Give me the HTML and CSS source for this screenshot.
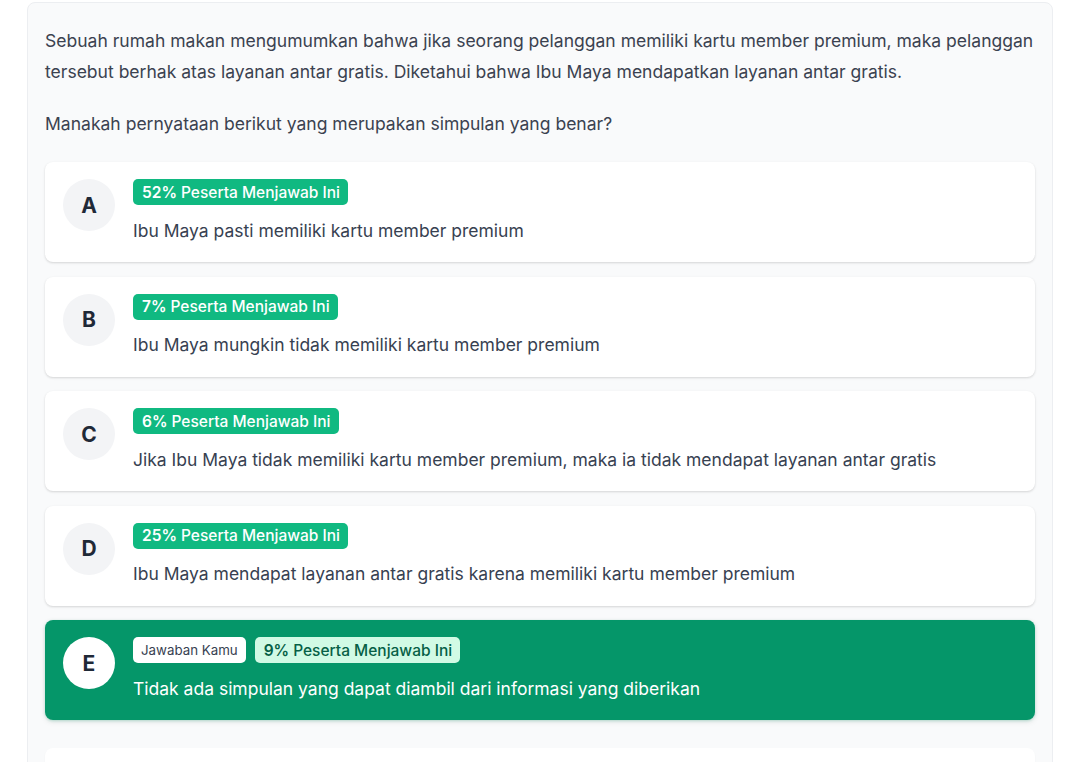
FILE: index.html
```html
<!DOCTYPE html>
<html lang="id">
<head>
<meta charset="utf-8">
<title>Soal</title>
<link rel="stylesheet" href="styles.css">
</head>
<body>
<div class="panel">
  <p class="question">Sebuah rumah makan mengumumkan bahwa jika seorang pelanggan memiliki kartu member premium, maka pelanggan tersebut berhak atas layanan antar gratis. Diketahui bahwa Ibu Maya mendapatkan layanan antar gratis.</p>
  <p class="question ask">Manakah pernyataan berikut yang merupakan simpulan yang benar?</p>

  <div class="options">
    <div class="option">
      <div class="letter">A</div>
      <div class="body">
        <div class="badges"><span class="badge"><b>52%</b> Peserta Menjawab Ini</span></div>
        <div class="text">Ibu Maya pasti memiliki kartu member premium</div>
      </div>
    </div>
    <div class="option">
      <div class="letter">B</div>
      <div class="body">
        <div class="badges"><span class="badge"><b>7%</b> Peserta Menjawab Ini</span></div>
        <div class="text">Ibu Maya mungkin tidak memiliki kartu member premium</div>
      </div>
    </div>
    <div class="option">
      <div class="letter">C</div>
      <div class="body">
        <div class="badges"><span class="badge"><b>6%</b> Peserta Menjawab Ini</span></div>
        <div class="text">Jika Ibu Maya tidak memiliki kartu member premium, maka ia tidak mendapat layanan antar gratis</div>
      </div>
    </div>
    <div class="option">
      <div class="letter">D</div>
      <div class="body">
        <div class="badges"><span class="badge"><b>25%</b> Peserta Menjawab Ini</span></div>
        <div class="text">Ibu Maya mendapat layanan antar gratis karena memiliki kartu member premium</div>
      </div>
    </div>
    <div class="option selected">
      <div class="letter">E</div>
      <div class="body">
        <div class="badges"><span class="tag">Jawaban Kamu</span><span class="badge"><b>9%</b> Peserta Menjawab Ini</span></div>
        <div class="text">Tidak ada simpulan yang dapat diambil dari informasi yang diberikan</div>
      </div>
    </div>
  </div>

  <div class="explain"></div>
</div>
</body>
</html>
```

FILE: styles.css
```css
html, body {
  margin: 0;
  padding: 0;
  background: #ffffff;
}
body {
  font-family: Inter, "Noto Sans", "Liberation Sans", sans-serif;
  color: #374151;
  overflow: hidden;
  height: 762px;
}
.panel {
  margin: 2px 27px 0 27px;
  background: #f9fafb;
  border: 1px solid #eceef1;
  border-radius: 8px;
  padding: 22px 17px 40px 17px;
}
.question {
  margin: 0;
  font-size: 17.55px;
  line-height: 31px;
  color: #3b4250;
}
.ask {
  margin-top: 21px;
}
.options {
  margin-top: 23px;
  display: flex;
  flex-direction: column;
  gap: 14.5px;
}
.option {
  display: flex;
  align-items: flex-start;
  background: #ffffff;
  border-radius: 8px;
  box-shadow: 0 1px 3px rgba(0,0,0,0.10), 0 1px 2px rgba(0,0,0,0.06);
  padding: 17px 18px 0 18px;
  height: 100px;
  box-sizing: border-box;
}
.letter {
  width: 52px;
  height: 52px;
  border-radius: 50%;
  background: #f3f4f6;
  color: #1f2937;
  font-weight: 700;
  font-size: 21px;
  display: flex;
  align-items: center;
  justify-content: center;
  flex-shrink: 0;
  margin-right: 18px;
}
.body {
  display: flex;
  flex-direction: column;
  gap: 11.5px;
}
.badges {
  display: flex;
  gap: 9px;
}
.badge {
  display: inline-flex;
  align-items: center;
  height: 26px;
  padding: 0 8px 0 9px;
  border-radius: 5px;
  background: #10b981;
  color: #ffffff;
  font-size: 15.5px;
  font-weight: 500;
  white-space: nowrap;
}
.badge b {
  font-weight: 600;
  margin-right: 4px;
}
.text {
  font-size: 17.5px;
  line-height: 27px;
  color: #374151;
}
.selected {
  background: #059669;
  box-shadow: 0 1px 3px rgba(5,150,105,0.25), 0 2px 6px rgba(0,0,0,0.08);
}
.selected .letter {
  background: #ffffff;
  color: #1f2937;
}
.selected .badge {
  background: #d1fae5;
  color: #065f46;
}
.selected .text {
  color: #ffffff;
}
.tag {
  display: inline-flex;
  align-items: center;
  height: 26px;
  padding: 0 8px;
  border-radius: 5px;
  background: #ffffff;
  color: #374151;
  font-size: 13.3px;
}
.explain {
  margin-top: 28px;
  height: 120px;
  background: #ffffff;
  border-radius: 8px;
  box-shadow: 0 1px 2px rgba(0,0,0,0.04);
}
```
